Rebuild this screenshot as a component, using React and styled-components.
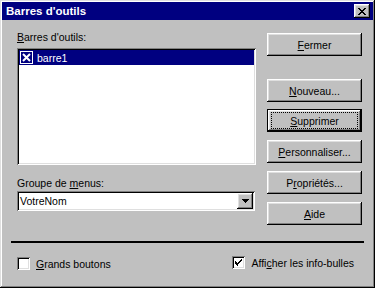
import React from 'react';
import styled, { createGlobalStyle, css } from 'styled-components';

const GlobalStyle = createGlobalStyle`
  html, body {
    margin: 0;
    padding: 0;
    background: #c0c0c0;
  }
  body {
    font-family: "Liberation Sans", Arial, sans-serif;
    font-size: 10.5px;
    color: #000;
  }
`;

const raised = css`
  box-shadow: inset -1px -1px #000, inset 1px 1px #fff, inset -2px -2px #808080, inset 2px 2px #dfdfdf;
`;

const sunken = css`
  box-shadow: inset 1px 1px #808080, inset -1px -1px #fff, inset 2px 2px #000, inset -2px -2px #dfdfdf;
`;

const Window = styled.div`
  width: 375px;
  height: 288px;
  box-sizing: border-box;
  padding: 2px;
  background: #c0c0c0;
  display: flex;
  flex-direction: column;
  box-shadow: inset -1px -1px #000, inset 1px 1px #dfdfdf, inset -2px -2px #808080, inset 2px 2px #fff;
`;

const TitleBar = styled.div`
  height: 18px;
  background: #000080;
  color: #fff;
  display: flex;
  align-items: center;
  justify-content: space-between;
  padding: 0 3px 0 4px;
  font-weight: bold;
  font-size: 11.5px;
`;

const CloseButton = styled.div`
  width: 16px;
  height: 14px;
  background: #c0c0c0;
  ${raised};
  display: flex;
  align-items: center;
  justify-content: center;
`;

const Body = styled.div`
  flex: 1;
  display: flex;
  flex-direction: column;
  padding: 11px 9px 0 9px;
`;

const Main = styled.div`
  display: grid;
  grid-template-columns: 246px 1fr;
  column-gap: 10px;
`;

const LeftCol = styled.div`
  display: flex;
  flex-direction: column;
  padding-left: 6px;
`;

const Label = styled.div`
  height: 13px;
  line-height: 13px;
  margin-top: ${p => p.$top || 0}px;
  margin-bottom: ${p => p.$gap || 2}px;
`;

const ListBox = styled.div`
  width: 239px;
  height: 117px;
  box-sizing: border-box;
  background: #fff;
  padding: 2px;
  ${sunken};
`;

const ListRow = styled.div`
  height: 15px;
  display: flex;
  align-items: center;
  gap: 4px;
  padding-left: 1px;
  background: ${p => (p.$selected ? '#000080' : 'transparent')};
  color: ${p => (p.$selected ? '#fff' : '#000')};
`;

const Combo = styled.div`
  width: 238px;
  height: 20px;
  box-sizing: border-box;
  background: #fff;
  padding: 2px;
  display: flex;
  align-items: center;
  ${sunken};
`;

const ComboText = styled.div`
  flex: 1;
  padding-left: 1px;
`;

const ComboButton = styled.div`
  width: 16px;
  height: 16px;
  background: #c0c0c0;
  ${raised};
  display: flex;
  align-items: center;
  justify-content: center;
`;

const ButtonCol = styled.div`
  display: flex;
  flex-direction: column;
  padding-top: 2px;
`;

const Button = styled.div`
  width: 95px;
  height: 23px;
  box-sizing: border-box;
  background: #c0c0c0;
  display: flex;
  align-items: center;
  justify-content: center;
  margin-top: ${p => p.$gap || 0}px;
  ${raised};
  ${p =>
    p.$default &&
    css`
      box-shadow: inset 0 0 0 1px #000, inset -2px -2px #000, inset 2px 2px #fff, inset -3px -3px #808080, inset 3px 3px #dfdfdf;
    `}
`;

const Focus = styled.span`
  box-sizing: border-box;
  border: 1px dotted #000;
  width: 87px;
  height: 17px;
  display: flex;
  align-items: center;
  justify-content: center;
`;

const Separator = styled.div`
  margin-top: 16px;
  height: 2px;
  background: #000;
`;

const Bottom = styled.div`
  display: flex;
  justify-content: space-between;
  padding: 12px 10px 0 6px;
`;

const Check = styled.label`
  display: flex;
  align-items: center;
  gap: 6px;
  margin-top: ${p => p.$offset || 0}px;
`;

const Box = styled.span`
  width: 13px;
  height: 13px;
  box-sizing: border-box;
  background: #fff;
  display: flex;
  align-items: center;
  justify-content: center;
  ${sunken};
`;

const U = styled.u`
  text-decoration: underline;
  text-underline-offset: 1px;
`;

const XMark = () => (
  <svg width="8" height="7" viewBox="0 0 8 7" shapeRendering="crispEdges">
    <path d="M0 0h2v1H0zM6 0h2v1H6zM1 1h2v1H1zM5 1h2v1H5zM2 2h4v1H2zM3 3h2v1H3zM2 4h4v1H2zM1 5h2v1H1zM5 5h2v1H5zM0 6h2v1H0zM6 6h2v1H6z" fill="#000" />
  </svg>
);

const ListCheck = () => (
  <svg width="13" height="13" viewBox="0 0 13 13" shapeRendering="crispEdges">
    <rect x="0.5" y="0.5" width="12" height="12" fill="#000080" stroke="#fff" />
    <path d="M3 3l7 7M10 3l-7 7" stroke="#fff" strokeWidth="2" shapeRendering="auto" />
  </svg>
);

const Tick = () => (
  <svg width="7" height="7" viewBox="0 0 7 7" shapeRendering="crispEdges">
    <path d="M6 0h1v1H6zM5 1h2v1H5zM0 2h1v1H0zM4 2h2v1H4zM0 3h2v1H0zM3 3h2v1H3zM0 4h4v1H0zM1 5h2v1H1zM2 6h1v1H2z" fill="#000" />
  </svg>
);

const Arrow = () => (
  <svg width="7" height="4" viewBox="0 0 7 4" shapeRendering="crispEdges">
    <path d="M0 0h7v1H0zM1 1h5v1H1zM2 2h3v1H2zM3 3h1v1H3z" fill="#000" />
  </svg>
);

export default function App() {
  return (
    <>
      <GlobalStyle />
      <Window>
        <TitleBar>
          <span>Barres d'outils</span>
          <CloseButton>
            <XMark />
          </CloseButton>
        </TitleBar>
        <Body>
          <Main>
            <LeftCol>
              <Label $gap={4}>
                <U>B</U>arres d'outils:
              </Label>
              <ListBox>
                <ListRow $selected>
                  <ListCheck />
                  barre1
                </ListRow>
              </ListBox>
              <Label $top={12} $gap={1}>
                Groupe de <U>m</U>enus:
              </Label>
              <Combo>
                <ComboText>VotreNom</ComboText>
                <ComboButton>
                  <Arrow />
                </ComboButton>
              </Combo>
            </LeftCol>
            <ButtonCol>
              <Button>
                <span><U>F</U>ermer</span>
              </Button>
              <Button $gap={23}>
                <span><U>N</U>ouveau...</span>
              </Button>
              <Button $gap={7} $default>
                <Focus><span><U>S</U>upprimer</span></Focus>
              </Button>
              <Button $gap={8}>
                <span><U>P</U>ersonnaliser...</span>
              </Button>
              <Button $gap={8}>
                <span>P<U>r</U>opriétés...</span>
              </Button>
              <Button $gap={8}>
                <span><U>A</U>ide</span>
              </Button>
            </ButtonCol>
          </Main>
          <Separator />
          <Bottom>
            <Check $offset={2}>
              <Box />
              <span><U>G</U>rands boutons</span>
            </Check>
            <Check>
              <Box>
                <Tick />
              </Box>
              <span>Affi<U>c</U>her les info-bulles</span>
            </Check>
          </Bottom>
        </Body>
      </Window>
    </>
  );
}
